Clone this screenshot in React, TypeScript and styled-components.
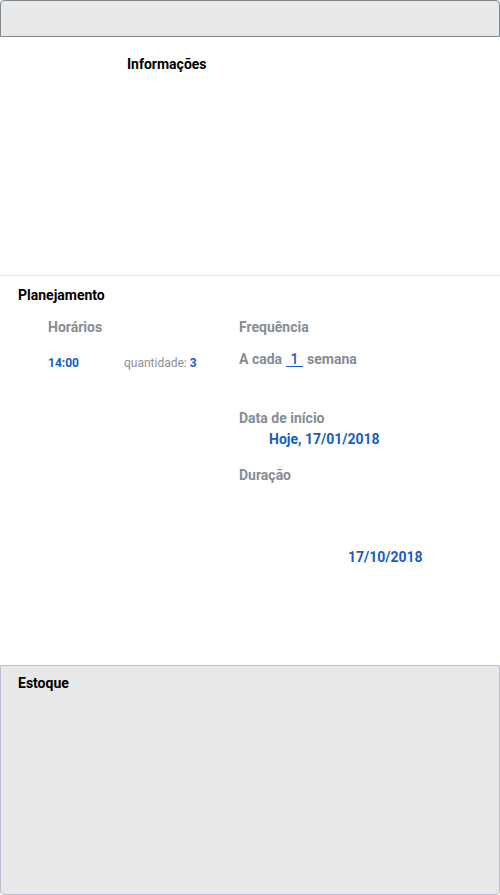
import React from "react";
import styled, { createGlobalStyle } from "styled-components";

const Global = createGlobalStyle`
  html, body { margin: 0; padding: 0; background: #ffffff; }
  body { font-family: Roboto, "Liberation Sans", Arial, sans-serif; }
  * { box-sizing: border-box; }
`;

const Page = styled.div`
  width: 500px;
  height: 895px;
  display: flex;
  flex-direction: column;
`;

const Header = styled.div`
  height: 37px;
  flex: none;
  background: #e9e9e9;
  border: 1px solid #7d8891;
  border-radius: 4px 4px 0 0;
`;

const InfoSection = styled.section`
  height: 239px;
  flex: none;
  padding: 19px 0 0 127px;
  border-bottom: 1px solid #e6e6e6;
`;

const SectionTitle = styled.h2`
  margin: 0;
  font-size: 14px;
  line-height: 16px;
  font-weight: 700;
  color: #000000;
`;

const PlanSection = styled.section`
  flex: none;
  height: 389px;
  padding: 11px 0 0 18px;
`;

const PlanGrid = styled.div`
  display: grid;
  grid-template-columns: 191px 1fr;
  padding: 16px 0 0 30px;
`;

const Column = styled.div`
  display: flex;
  flex-direction: column;
`;

const Label = styled.div<{ $mt?: number }>`
  font-size: 14px;
  line-height: 16px;
  font-weight: 700;
  color: #868d94;
  margin-top: ${(p) => p.$mt ?? 0}px;
`;

const TimeRow = styled.div`
  display: flex;
  align-items: baseline;
  margin-top: 21px;
  font-size: 12px;
  line-height: 14px;
`;

const Time = styled.span`
  width: 76px;
  font-weight: 700;
  color: #175cc1;
`;

const Qty = styled.span`
  color: #8a9096;
`;

const QtyValue = styled.b`
  color: #175cc1;
`;

const FreqRow = styled.div`
  margin-top: 16px;
  font-size: 14px;
  line-height: 16px;
  font-weight: 700;
  color: #868d94;
  display: flex;
  align-items: baseline;
  gap: 4px;
`;

const Blank = styled.span`
  display: inline-block;
  width: 17px;
  text-align: center;
  color: #175cc1;
  font-weight: 500;
  border-bottom: 1px solid #175cc1;
  line-height: 14px;
`;

const Value = styled.div<{ $ml: number; $mt: number }>`
  font-size: 14px;
  line-height: 16px;
  font-weight: 700;
  color: #175cc1;
  margin: ${(p) => p.$mt}px 0 0 ${(p) => p.$ml}px;
`;

const StockBox = styled.section`
  flex: 1;
  background: #e9e9e9;
  border: 1px solid #bfbdd2;
  border-radius: 0 0 4px 4px;
  padding: 9px 0 0 17px;
`;

export default function App() {
  return (
    <Page>
      <Global />
      <Header />
      <InfoSection>
        <SectionTitle>Informações</SectionTitle>
      </InfoSection>
      <PlanSection>
        <SectionTitle>Planejamento</SectionTitle>
        <PlanGrid>
          <Column>
            <Label>Horários</Label>
            <TimeRow>
              <Time>14:00</Time>
              <Qty>
                quantidade: <QtyValue>3</QtyValue>
              </Qty>
            </TimeRow>
          </Column>
          <Column>
            <Label>Frequência</Label>
            <FreqRow>
              A cada <Blank>1</Blank> semana
            </FreqRow>
            <Label $mt={43}>Data de início</Label>
            <Value $ml={30} $mt={5}>Hoje, 17/01/2018</Value>
            <Label $mt={20}>Duração</Label>
            <Value $ml={109} $mt={66}>17/10/2018</Value>
          </Column>
        </PlanGrid>
      </PlanSection>
      <StockBox>
        <SectionTitle>Estoque</SectionTitle>
      </StockBox>
    </Page>
  );
}
